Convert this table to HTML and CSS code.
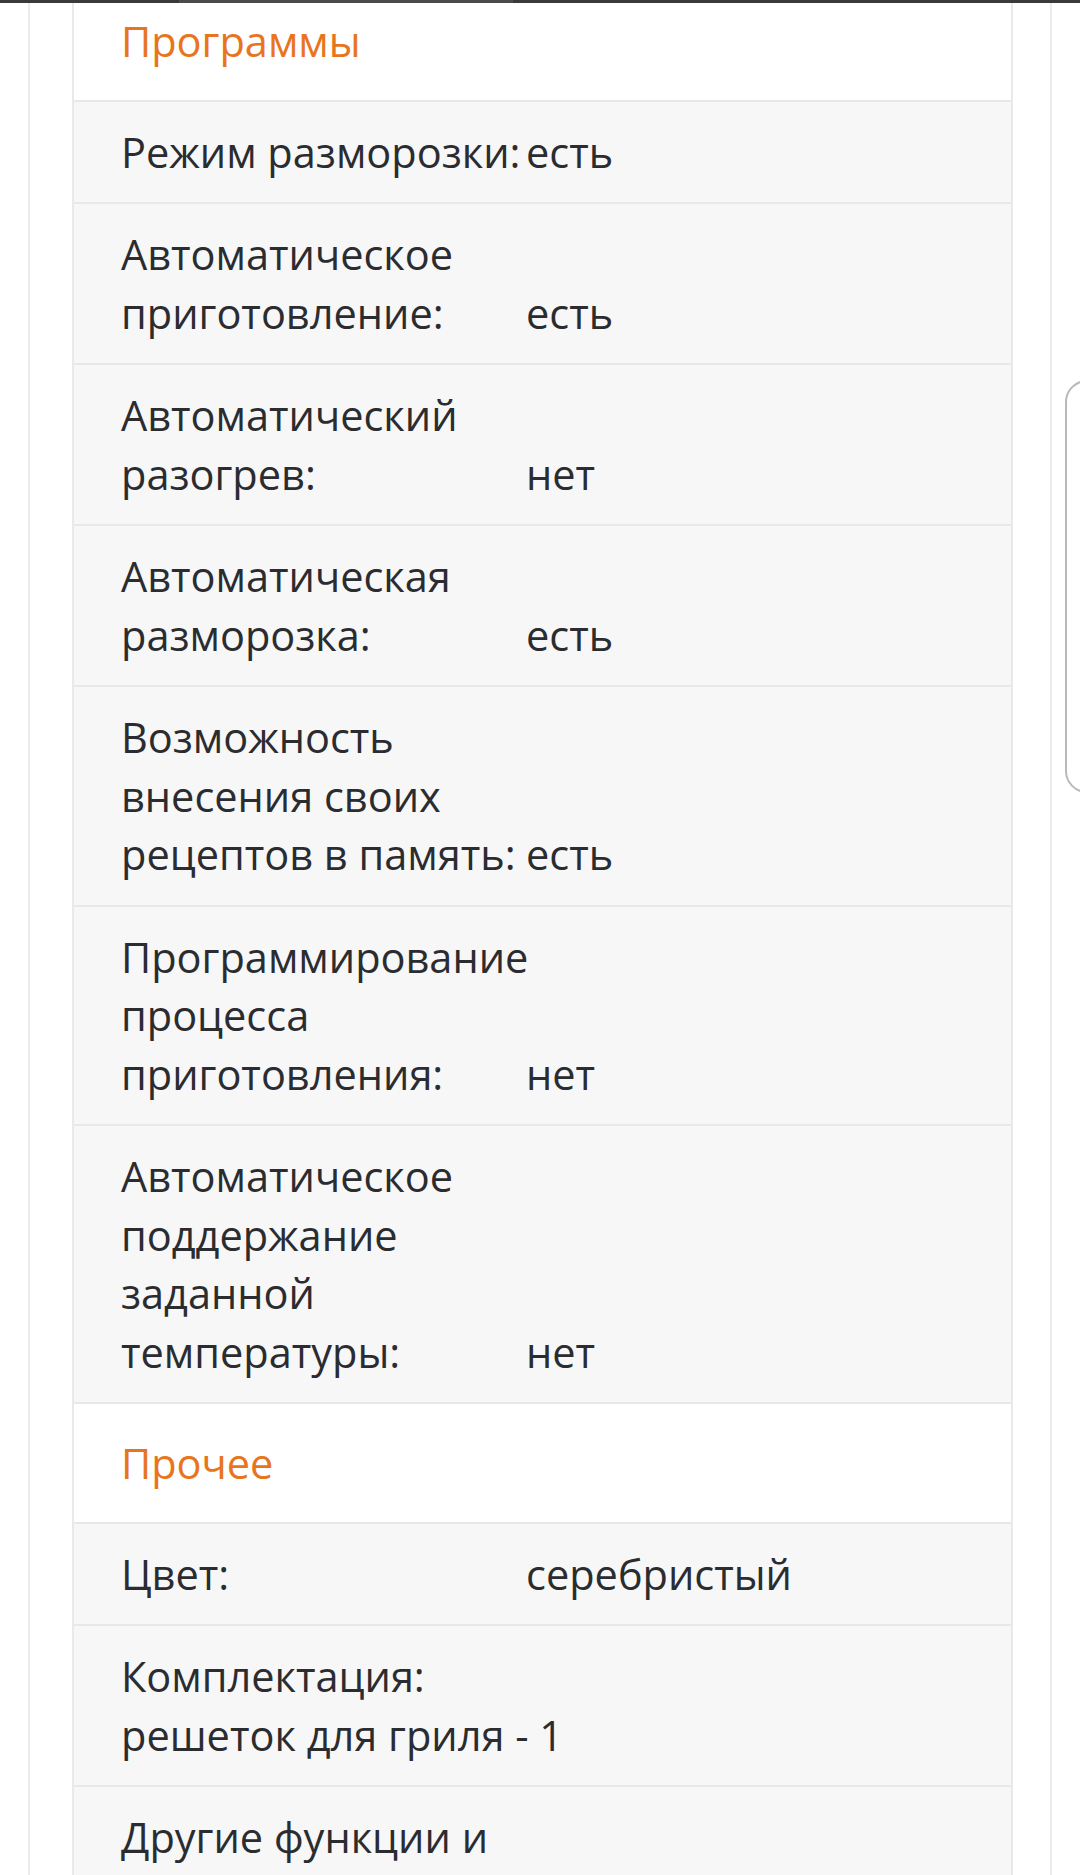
FILE: index.html
```html
<!DOCTYPE html>
<html lang="ru">
<head>
<meta charset="utf-8">
<title>Характеристики</title>
<link rel="stylesheet" href="styles.css">
</head>
<body>
<div class="topbar"><div class="topbar-seg"></div></div>
<div class="page">
  <div class="rail"></div>
  <div class="specs">
    <div class="group-title">Программы</div>
    <div class="row"><div class="label">Режим разморозки:</div><div class="value">есть</div></div>
    <div class="row"><div class="label">Автоматическое приготовление:</div><div class="value">есть</div></div>
    <div class="row"><div class="label">Автоматический разогрев:</div><div class="value">нет</div></div>
    <div class="row"><div class="label">Автоматическая разморозка:</div><div class="value">есть</div></div>
    <div class="row"><div class="label">Возможность внесения своих рецептов в память:</div><div class="value">есть</div></div>
    <div class="row"><div class="label">Программирование процесса приготовления:</div><div class="value">нет</div></div>
    <div class="row"><div class="label">Автоматическое поддержание заданной температуры:</div><div class="value">нет</div></div>
    <div class="group-title">Прочее</div>
    <div class="row"><div class="label">Цвет:</div><div class="value">серебристый</div></div>
    <div class="row"><div class="full">Комплектация: решеток для гриля - 1</div></div>
    <div class="row"><div class="label">Другие функции и</div><div class="value"></div></div>
  </div>
  <div class="rail"></div>
</div>
<div class="side-tab"></div>
</body>
</html>
```
FILE: styles.css
```css
html, body {
  margin: 0;
  padding: 0;
  background: #ffffff;
  overflow: hidden;
}
body {
  width: 1080px;
  height: 1875px;
  font-family: "Open Sans", "Noto Sans", sans-serif;
  color: #2b2c30;
  position: relative;
}
.topbar {
  position: relative;
  z-index: 2;
  height: 3px;
  background: #3a3a3a;
  display: flex;
  padding-left: 179px;
}
.topbar-seg {
  width: 334px;
  background: #4b4b4b;
}
.page {
  display: flex;
  align-items: stretch;
  padding-left: 28px;
  height: 1872px;
}
.rail {
  width: 2px;
  background: #ececec;
  flex: none;
}
.specs {
  width: 937px;
  margin: -21px 37px 0 42px;
  border-left: 2px solid #e9e9e9;
  border-right: 2px solid #e9e9e9;
  flex: none;
  font-size: 41.5px;
  line-height: 58.5px;
}
.group-title {
  background: #ffffff;
  color: #e8751e;
  padding: 30px 0 29px 47px;
  border-bottom: 2px solid #e8e8e8;
}
.row {
  display: grid;
  grid-template-columns: 405px 1fr;
  padding: 21px 0 21px 47px;
  background: #f7f7f8;
  border-bottom: 2px solid #e8e8e8;
}
.row .value {
  align-self: end;
}
.row .full {
  grid-column: 1 / -1;
  max-width: 456px;
}
.side-tab {
  position: absolute;
  left: 1065px;
  top: 380px;
  width: 40px;
  height: 409px;
  border: 2px solid #b9b9b9;
  border-radius: 22px;
  background: #ffffff;
}
```
